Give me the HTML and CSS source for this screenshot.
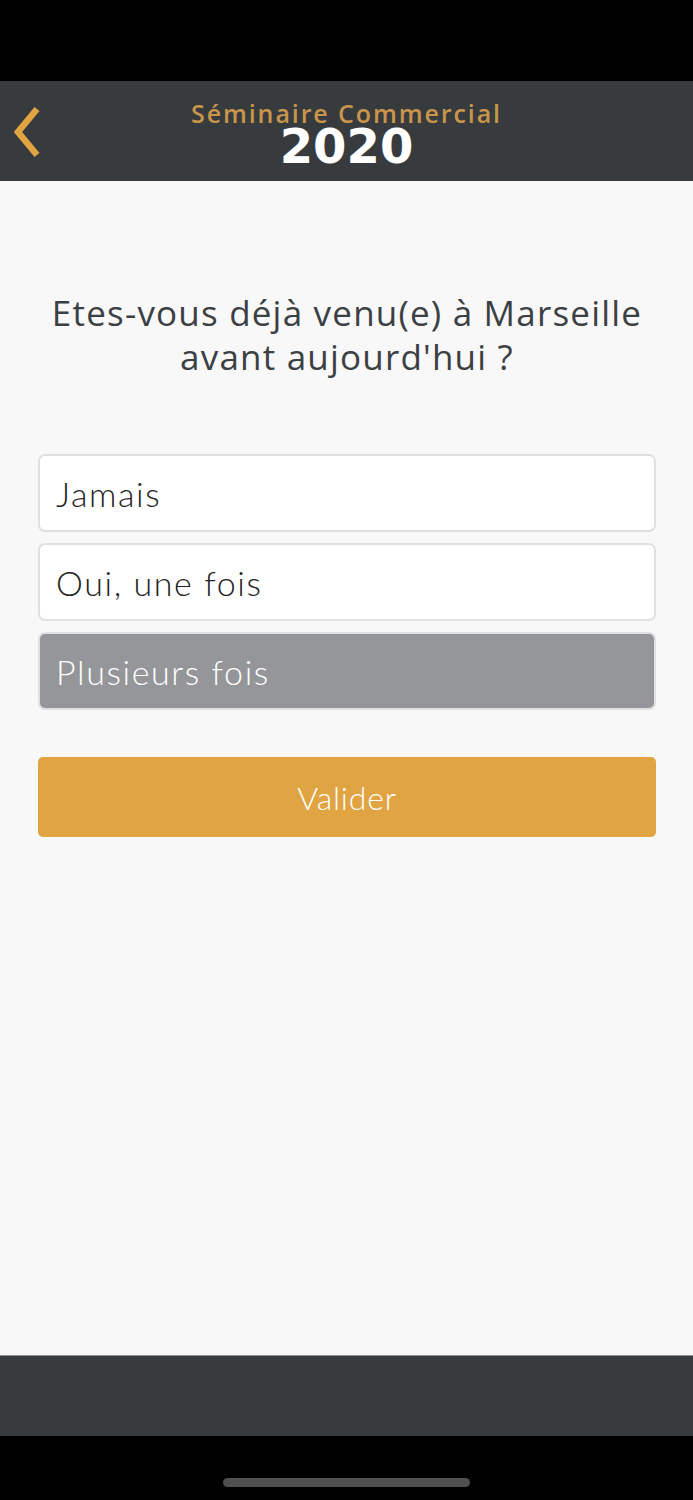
FILE: index.html
```html
<!DOCTYPE html>
<html lang="fr">
<head>
    <meta charset="UTF-8">
    <meta name="viewport" content="width=device-width, initial-scale=1.0">
    <title>Séminaire Commercial 2020</title>
    <link rel="stylesheet" href="styles.css">
</head>
<body>
    <div id="app">
        <!-- Status bar area -->
        <div class="status-bar"></div>

        <!-- Header -->
        <div class="header">
            <button class="back-button" aria-label="Retour">
                <svg width="30" height="54" viewBox="0 0 30 54">
                    <polyline points="25,4 6,27 25,50" fill="none" stroke="#e0a443" stroke-width="6.5" stroke-linecap="butt"/>
                </svg>
            </button>
            <div class="logo">
                <div class="logo-title">Séminaire Commercial</div>
                <div class="logo-year">2020</div>
            </div>
        </div>

        <!-- Question -->
        <div class="content">
            <h1 class="question">Etes-vous déjà venu(e) à Marseille<br>avant aujourd'hui ?</h1>

            <div class="answers">
                <div class="answer">Jamais</div>
                <div class="answer">Oui, une fois</div>
                <div class="answer selected">Plusieurs fois</div>
            </div>

            <button class="submit-button">Valider</button>
        </div>

        <!-- Bottom bar -->
        <div class="footer"></div>
        <div class="home-area">
            <div class="home-indicator"></div>
        </div>
    </div>
</body>
</html>
```

FILE: styles.css
```css
body {
    margin: 0;
    font-family: "Lato", "Open Sans", sans-serif;
    background-color: #000;
}

#app {
    width: 693px;
    height: 1500px;
    display: flex;
    flex-direction: column;
}

.status-bar {
    height: 81px;
    background-color: #000;
}

/* Header with logo */
.header {
    height: 100px;
    background-color: #373b3e;
    display: flex;
    align-items: center;
    justify-content: center;
    position: relative;
}

.back-button {
    position: absolute;
    left: 12px;
    top: 24px;
    background: none;
    border: none;
    padding: 0;
    cursor: pointer;
}

.logo {
    text-align: center;
    margin-top: 2px;
}

.logo-title {
    font-family: "Open Sans", sans-serif;
    font-weight: 600;
    font-size: 25px;
    line-height: 28px;
    letter-spacing: 1.9px;
    color: #c9954b;
}

.logo-year {
    font-family: "DejaVu Sans", sans-serif;
    font-weight: 700;
    font-size: 48px;
    line-height: 38px;
    color: #fff;
}

/* Main content */
.content {
    flex: 1;
    background-color: #f8f8f8;
    padding: 0 37px 0 38px;
    display: flex;
    flex-direction: column;
}

.question {
    margin: 110px 0 0;
    font-family: "Open Sans", sans-serif;
    font-weight: 400;
    font-size: 35px;
    line-height: 44px;
    letter-spacing: 1.2px;
    text-align: center;
    color: #3b4043;
}

.answers {
    margin-top: 75px;
    display: flex;
    flex-direction: column;
    gap: 11px;
}

.answer {
    height: 74px;
    border: 2px solid #e0e0e0;
    border-radius: 7px;
    background-color: #fff;
    padding-left: 16px;
    display: flex;
    align-items: center;
    font-size: 34px;
    font-weight: 300;
    letter-spacing: 1.6px;
    color: #222;
}

.answer.selected {
    background-color: #959699;
    color: #fff;
}

.submit-button {
    margin-top: 47px;
    height: 80px;
    border: none;
    border-radius: 5px;
    background-color: #e0a443;
    color: #fff;
    font-family: "Lato", sans-serif;
    font-weight: 300;
    font-size: 32px;
    letter-spacing: 0.8px;
    cursor: pointer;
}

/* Bottom */
.footer {
    height: 80px;
    background-color: #373b3e;
    border-top: 1px solid #8a8c8e;
}

.home-area {
    height: 64px;
    background-color: #000;
    display: flex;
    justify-content: center;
}

.home-indicator {
    margin-top: 42px;
    width: 247px;
    height: 9px;
    border-radius: 5px;
    background-color: #4f4f4f;
}
```
